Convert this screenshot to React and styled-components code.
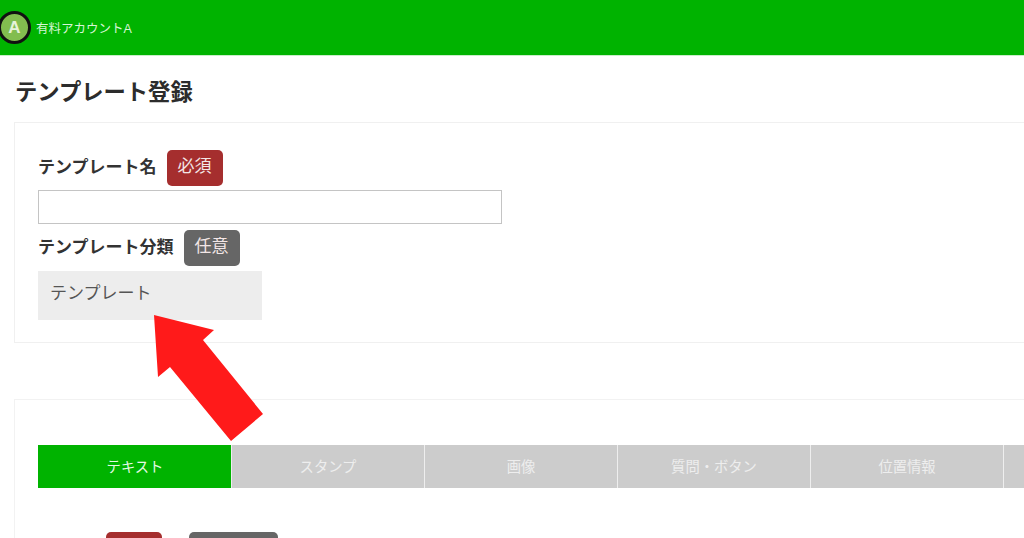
import React from 'react';
import styled, { createGlobalStyle } from 'styled-components';

const tabs = ['テキスト', 'スタンプ', '画像', '質問・ボタン', '位置情報', ''];

function App() {
  return (
    <Page>
      <GlobalStyle />
      <Header>
        <Avatar>A</Avatar>
        <AccountName>有料アカウントA</AccountName>
      </Header>
      <Title>テンプレート登録</Title>
      <Card>
        <FieldRow>
          <Label>テンプレート名</Label>
          <Badge $tone="required">必須</Badge>
        </FieldRow>
        <NameInput />
        <FieldRow $tight>
          <Label>テンプレート分類</Label>
          <Badge $tone="optional">任意</Badge>
        </FieldRow>
        <TypeBox>テンプレート</TypeBox>
      </Card>
      <ContentCard>
        <Tabs>
          {tabs.map((tab, i) => (
            <Tab key={i} $active={i === 0}>{tab}</Tab>
          ))}
        </Tabs>
        <BottomRow>
          <Badge $tone="required" />
          <Badge $tone="optional" $wide />
        </BottomRow>
      </ContentCard>
      <Arrow viewBox="0 0 112 128" aria-hidden="true">
        <polygon points="2,0 62,15 51,25 111,99 79,126 18,52 6,62" fill="#ff1a1a" />
      </Arrow>
    </Page>
  );
}

export default App;

const GlobalStyle = createGlobalStyle`
  html, body {
    margin: 0;
    padding: 0;
    background: #fff;
    overflow: hidden;
  }
  body {
    font-family: "Liberation Sans", "Noto Sans CJK JP", sans-serif;
  }
`;

const Page = styled.div`
  position: relative;
  width: 1024px;
  height: 538px;
  overflow: hidden;
  color: #333;
`;

const Header = styled.div`
  display: flex;
  align-items: center;
  height: 56px;
  background: #00b300;
  border-bottom: 1px solid #c8eec8;
  box-sizing: border-box;
`;

const Avatar = styled.div`
  display: flex;
  flex-shrink: 0;
  align-items: center;
  justify-content: center;
  width: 33px;
  height: 33px;
  margin-left: -2px;
  border: 3px solid #111;
  border-radius: 50%;
  box-sizing: border-box;
  background: #82bd4f;
  color: #e6f3d8;
  font-size: 17px;
  font-weight: 700;
`;

const AccountName = styled.span`
  margin-left: 5px;
  font-size: 12.5px;
  color: #d6f5d6;
`;

const Title = styled.h1`
  margin: 25px 0 0 15px;
  height: 41px;
  font-size: 22.3px;
  line-height: 24px;
  font-weight: 700;
  color: #2c2c2c;
`;

const Card = styled.div`
  box-sizing: border-box;
  width: 1100px;
  height: 221px;
  margin-left: 14px;
  padding: 27px 23px 0;
  border: 1px solid #f0f0f0;
`;

const FieldRow = styled.div`
  display: flex;
  align-items: center;
  gap: 10px;
  height: 36px;
  margin-top: ${props => (props.$tight ? '6px' : '0')};
`;

const Label = styled.span`
  padding-bottom: 6px;
  font-size: 17px;
  font-weight: 700;
  color: #333;
`;

const Badge = styled.span`
  display: flex;
  align-items: center;
  justify-content: center;
  box-sizing: border-box;
  width: ${props => (props.$wide ? '89px' : '56px')};
  height: 36px;
  padding-bottom: 7px;
  border-radius: 5px;
  font-size: 17px;
  color: #f3e6e6;
  background: ${props => (props.$tone === 'required' ? '#a52e2e' : '#666')};
`;

const NameInput = styled.input`
  display: block;
  box-sizing: border-box;
  width: 464px;
  height: 34px;
  margin-top: 4px;
  border: 1px solid #c4c4c4;
  background: #fff;
  outline: none;
`;

const TypeBox = styled.div`
  box-sizing: border-box;
  width: 224px;
  height: 49px;
  margin-top: 5px;
  padding: 11px 12px 0;
  background: #ededed;
  font-size: 17px;
  line-height: 24px;
  color: #555;
`;

const ContentCard = styled.div`
  box-sizing: border-box;
  width: 1100px;
  height: 200px;
  margin: 56px 0 0 14px;
  padding: 45px 23px 0;
  border: 1px solid #f2f2f2;
`;

const Tabs = styled.div`
  display: flex;
`;

const Tab = styled.div`
  display: flex;
  flex-shrink: 0;
  align-items: center;
  justify-content: center;
  box-sizing: border-box;
  width: 193px;
  height: 43px;
  padding-bottom: 3px;
  border-left: 1px solid ${props => (props.$active ? '#00b300' : '#eee')};
  font-size: 14.3px;
  color: ${props => (props.$active ? '#e4f9e4' : '#eee')};
  background: ${props => (props.$active ? '#00b300' : '#ccc')};
`;

const BottomRow = styled.div`
  display: flex;
  gap: 27px;
  margin: 44px 0 0 68px;
`;

const Arrow = styled.svg`
  position: absolute;
  left: 152px;
  top: 315px;
  width: 112px;
  height: 128px;
`;
